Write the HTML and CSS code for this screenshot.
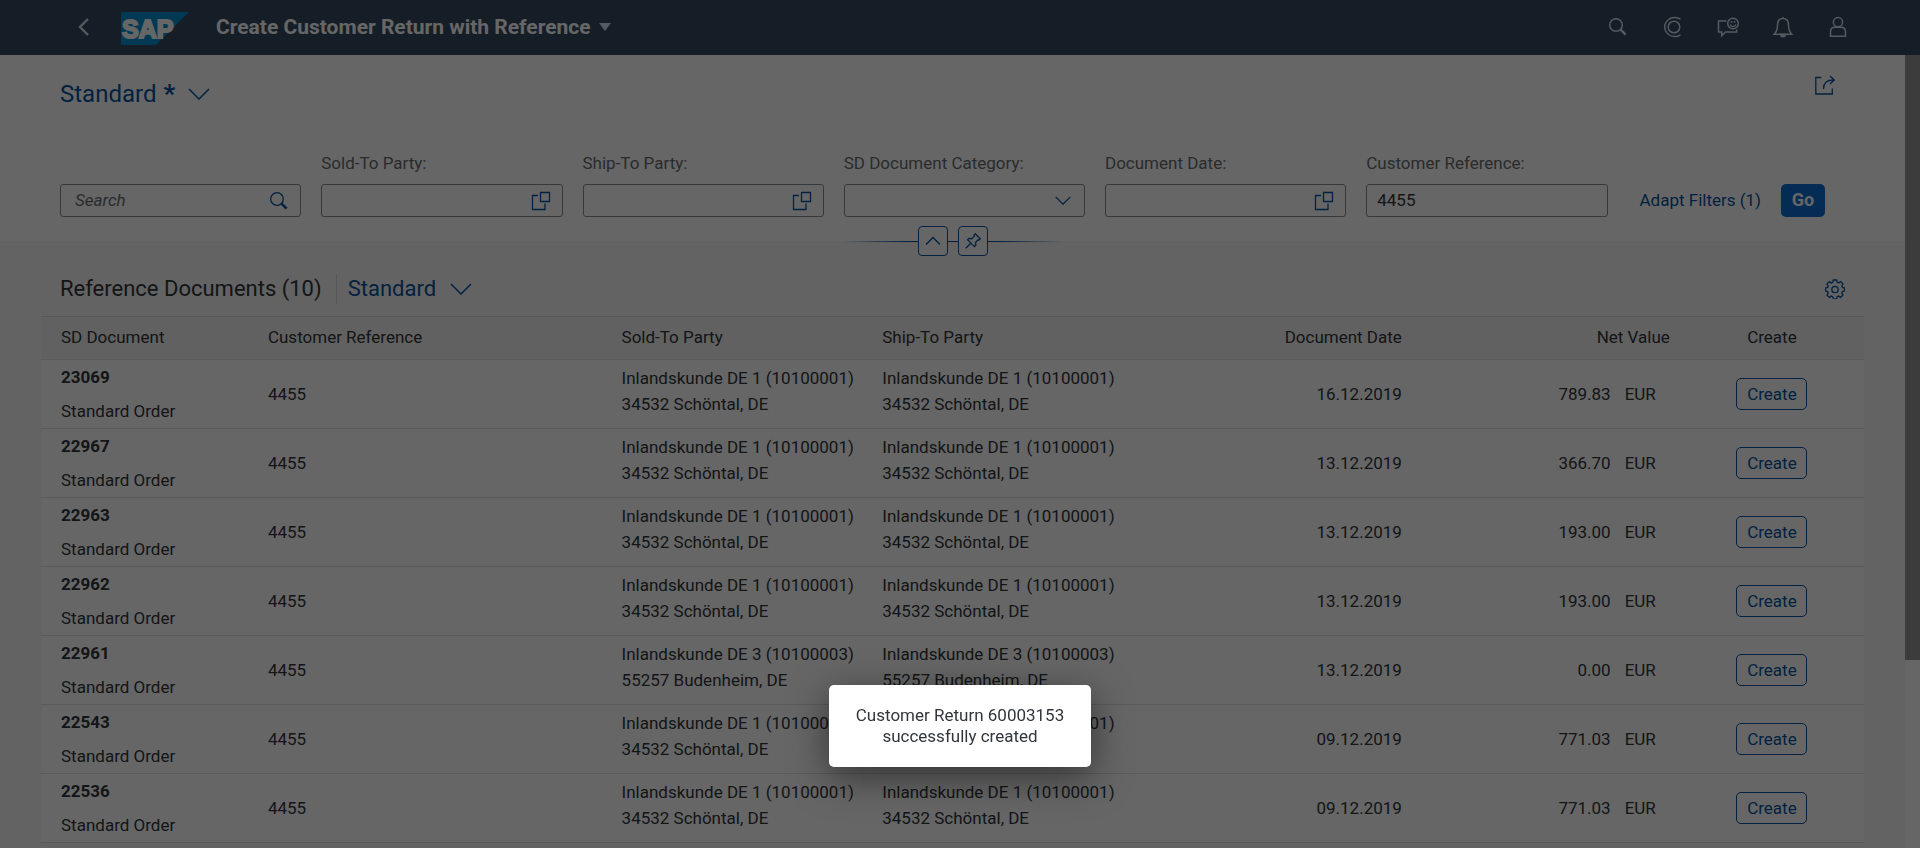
FILE: index.html
```
<!DOCTYPE html>
<html lang="en">
<head>
<meta charset="utf-8">
<title>Create Customer Return with Reference</title>
<link rel="stylesheet" href="styles.css">
</head>
<body>
<svg class="sprite" aria-hidden="true">
  <symbol id="i-search" viewBox="0 0 20 20"><circle cx="8" cy="8" r="6.3"/><path d="M12.6 12.6l5 5" stroke-width="2.6"/></symbol>
  <symbol id="i-help" viewBox="0 0 20 20"><path d="M7 4.500H1.500v14h12.500v-6"/><path d="M9.500 1.500h9v9h-9z"/></symbol>
  <symbol id="i-down" viewBox="0 0 22 12"><path d="M1 1l10 10L21 1"/></symbol>
  <symbol id="i-share" viewBox="0 0 20 20"><path d="M6.500 2.500H.8v16.500h16.500v-5.500"/><path d="M8.500 14c0-6 3-9 10-9M15 1l4.200 4-4.200 4"/></symbol>
  <symbol id="i-gear" viewBox="0 0 20 20"><path d="M8.300 1h3.400l.5 2.300 1.500.6 2-1.300 2.300 2.400-1.200 2 .6 1.500 2.200.5v3l-2.200.5-.6 1.500 1.200 2-2.300 2.400-2-1.300-1.500.6-.5 2.300H8.300l-.5-2.300-1.500-.6-2 1.300L2 16l1.200-2-.6-1.500L.5 12V9l2.100-.5L3.200 7 2 5l2.300-2.400 2 1.300 1.500-.6z"/><circle cx="10" cy="10.500" r="3.200"/></symbol>
</svg>

<header class="shell">
  <button class="shell-btn back" aria-label="Back"><svg viewBox="0 0 11 18"><path d="M10 1L2 9l8 8"/></svg></button>
  <a class="logo" href="#" aria-label="SAP"><svg viewBox="0 0 68 33"><path class="logo-bg" d="M0 0h68L35 33H0z"/><text class="logo-text" x="1" y="26">SAP</text></svg></a>
  <button class="title">Create Customer Return with Reference<span class="caret"></span></button>
  <nav class="shell-tools" aria-label="Shell">
    <button class="shell-btn" aria-label="Search"><svg viewBox="0 0 20 20"><use href="#i-search"/></svg></button>
    <button class="shell-btn" aria-label="CoPilot"><svg viewBox="0 0 20 20"><path d="M17.500 2.200C14 -.3 9 -.1 5.500 2.500 .500 6.500 .500 13.500 5.500 17.500c3.500 2.600 8.500 2.800 12 .3"/><circle cx="11" cy="10" r="5.800"/></svg></button>
    <button class="shell-btn" aria-label="Feedback"><svg viewBox="0 0 20 20"><path d="M8.500 4H.500v11h3.200v3.800l3.800-3.800h11.200v-2.500"/><circle cx="15" cy="6.500" r="5.300"/><path d="M12 7.500c1.200 2.600 4.800 2.600 6 0M13.500 4v1.700M16.500 4v1.700"/></svg></button>
    <button class="shell-btn" aria-label="Notifications"><svg viewBox="0 0 20 20"><path d="M10 1.500c-4 0-5.500 3-5.500 6.500 0 4-1 7-3.300 9.200h17.600C16.500 15 15.500 12 15.500 8c0-3.500-1.500-6.500-5.500-6.500zM10 0v1.500"/><path class="solid" d="M7.500 17.500h5c-.5 3-4.500 3-5 0z"/></svg></button>
    <button class="shell-btn" aria-label="User"><svg viewBox="0 0 20 20"><circle cx="10" cy="5.200" r="4.600"/><path d="M2.500 19.300v-4.500c0-3 2-4.600 4.500-4.600h6c2.500 0 4.500 1.600 4.500 4.600v4.500z"/></svg></button>
  </nav>
</header>

<main class="page">
  <section class="filters">
    <div class="variant-row">
      <button class="variant variant-lg">Standard <b>*</b><svg class="chev"><use href="#i-down"/></svg></button>
      <button class="icon-btn share" aria-label="Share"><svg><use href="#i-share"/></svg></button>
    </div>
    <form class="filter-bar">
      <div class="field"><div class="control"><input type="search" placeholder="Search" aria-label="Search" class="search"><svg><use href="#i-search"/></svg></div></div>
      <div class="field"><label for="sold">Sold-To Party:</label><div class="control"><input id="sold" type="text"><svg><use href="#i-help"/></svg></div></div>
      <div class="field"><label for="ship">Ship-To Party:</label><div class="control"><input id="ship" type="text"><svg><use href="#i-help"/></svg></div></div>
      <div class="field"><label for="cat">SD Document Category:</label><div class="control"><select id="cat"><option></option></select><svg class="small-chev"><use href="#i-down"/></svg></div></div>
      <div class="field"><label for="date">Document Date:</label><div class="control"><input id="date" type="text"><svg><use href="#i-help"/></svg></div></div>
      <div class="field"><label for="ref">Customer Reference:</label><div class="control"><input id="ref" type="text" value="4455"></div></div>
      <div class="actions"><button type="button" class="adapt">Adapt Filters (1)</button><button type="button" class="go">Go</button></div>
    </form>
    <div class="divider">
      <button aria-label="Collapse header"><svg viewBox="0 0 16 16"><path d="M1 11.500l7-7 7 7"/></svg></button>
      <button aria-label="Pin header"><svg viewBox="0 0 16 16"><path d="M10.200.8l5 5-1.200 1.300-.9-.3-2.600 2.700.3 2.700-1.400 1.400-6.800-6.800L4 5.400l2.700.3 2.700-2.600-.4-1z"/><path d="M5.500 10.500L.8 15.200"/></svg></button>
    </div>
  </section>

  <section class="documents">
    <div class="toolbar">
      <h2>Reference Documents (10)</h2>
      <button class="variant">Standard<svg class="chev"><use href="#i-down"/></svg></button>
      <button class="icon-btn gear" aria-label="Settings"><svg><use href="#i-gear"/></svg></button>
    </div>
    <table>
      <colgroup><col class="c-doc"><col class="c-ref"><col class="c-party"><col class="c-party"><col class="c-date"><col class="c-net"><col class="c-create"></colgroup>
      <thead><tr><th>SD Document</th><th>Customer Reference</th><th>Sold-To Party</th><th>Ship-To Party</th><th class="end">Document Date</th><th class="end">Net Value</th><th class="mid">Create</th></tr></thead>
      <tbody>
        <tr><td><b>23069</b><span class="kind">Standard Order</span></td><td>4455</td><td class="party">Inlandskunde DE 1 (10100001)<br>34532 Schöntal, DE</td><td class="party">Inlandskunde DE 1 (10100001)<br>34532 Schöntal, DE</td><td class="end">16.12.2019</td><td class="end">789.83<span class="cur">EUR</span></td><td class="mid"><button class="create">Create</button></td></tr>
        <tr><td><b>22967</b><span class="kind">Standard Order</span></td><td>4455</td><td class="party">Inlandskunde DE 1 (10100001)<br>34532 Schöntal, DE</td><td class="party">Inlandskunde DE 1 (10100001)<br>34532 Schöntal, DE</td><td class="end">13.12.2019</td><td class="end">366.70<span class="cur">EUR</span></td><td class="mid"><button class="create">Create</button></td></tr>
        <tr><td><b>22963</b><span class="kind">Standard Order</span></td><td>4455</td><td class="party">Inlandskunde DE 1 (10100001)<br>34532 Schöntal, DE</td><td class="party">Inlandskunde DE 1 (10100001)<br>34532 Schöntal, DE</td><td class="end">13.12.2019</td><td class="end">193.00<span class="cur">EUR</span></td><td class="mid"><button class="create">Create</button></td></tr>
        <tr><td><b>22962</b><span class="kind">Standard Order</span></td><td>4455</td><td class="party">Inlandskunde DE 1 (10100001)<br>34532 Schöntal, DE</td><td class="party">Inlandskunde DE 1 (10100001)<br>34532 Schöntal, DE</td><td class="end">13.12.2019</td><td class="end">193.00<span class="cur">EUR</span></td><td class="mid"><button class="create">Create</button></td></tr>
        <tr><td><b>22961</b><span class="kind">Standard Order</span></td><td>4455</td><td class="party">Inlandskunde DE 3 (10100003)<br>55257 Budenheim, DE</td><td class="party">Inlandskunde DE 3 (10100003)<br>55257 Budenheim, DE</td><td class="end">13.12.2019</td><td class="end">0.00<span class="cur">EUR</span></td><td class="mid"><button class="create">Create</button></td></tr>
        <tr><td><b>22543</b><span class="kind">Standard Order</span></td><td>4455</td><td class="party">Inlandskunde DE 1 (10100001)<br>34532 Schöntal, DE</td><td class="party">Inlandskunde DE 1 (10100001)<br>34532 Schöntal, DE</td><td class="end">09.12.2019</td><td class="end">771.03<span class="cur">EUR</span></td><td class="mid"><button class="create">Create</button></td></tr>
        <tr><td><b>22536</b><span class="kind">Standard Order</span></td><td>4455</td><td class="party">Inlandskunde DE 1 (10100001)<br>34532 Schöntal, DE</td><td class="party">Inlandskunde DE 1 (10100001)<br>34532 Schöntal, DE</td><td class="end">09.12.2019</td><td class="end">771.03<span class="cur">EUR</span></td><td class="mid"><button class="create">Create</button></td></tr>
      </tbody>
    </table>
  </section>
  <div class="scrollbar"><div class="thumb"></div></div>
</main>

<div class="backdrop"></div>
<div class="toast" role="status">Customer Return 60003153 successfully created</div>
</body>
</html>
```
FILE: styles.css
```
* { box-sizing: border-box; }
body {
  margin: 0;
  height: 100vh;
  overflow: hidden;
  display: flex;
  flex-direction: column;
  background: #f7f7f7;
  color: #32363a;
  font: 17px/26px Roboto, "Liberation Sans", sans-serif;
}
button, input, select { font: inherit; color: inherit; }
button { padding: 0; border: 0; background: none; white-space: nowrap; }
svg { fill: none; stroke: currentColor; stroke-width: 1.3; display: block; }
.sprite { position: absolute; width: 0; height: 0; }

/* Shell header */
.shell {
  flex: none;
  height: 55px;
  padding: 0 72px 2px 78px;
  display: flex;
  align-items: center;
  background: #354a5f;
  color: #d1e0ee;
}
.shell-btn { color: #d1e0ee; }
.back svg { width: 11px; height: 18px; stroke-width: 2.4; }
.logo { margin: 4px 27px 0 32px; }
.logo svg { width: 68px; height: 33px; stroke: none; }
.logo-bg { fill: #008fd3; }
.logo-text { fill: #fff; stroke: #fff; stroke-width: 2; font: bold 25px "Liberation Sans", sans-serif; }
.title { color: #fff; font-size: 21px; font-weight: 700; display: flex; align-items: center; gap: 8px; }
.caret { border: 6px solid transparent; border-top: 8px solid #d1e0ee; border-bottom: 0; }
.shell-tools { margin-left: auto; display: flex; gap: 35px; }
.shell-tools svg { width: 20px; height: 20px; stroke-width: 1.5; overflow: visible; }
.solid { fill: currentColor; }

/* Page and scrollbar */
.page {
  flex: 1;
  min-height: 0;
  display: grid;
  grid-template: auto 1fr / 1fr 15px;
}
.scrollbar { grid-area: 1 / 2 / 3 / 3; background: #fff; }
.thumb { height: 76.3%; background: #969696; }

/* Filter bar */
.filters { background: #fff; padding: 20px 80px 0 60px; box-shadow: 0 1px 0 #f0f0f0; }
.variant-row { display: flex; justify-content: space-between; align-items: flex-start; height: 75px; }
.variant { color: #0854a0; font-size: 22px; display: flex; align-items: center; gap: 14px; }
.variant-lg { font-size: 24px; height: 38px; gap: 7px; }
.variant-lg b { font-size: 26px; }
.variant-lg .chev { margin-left: 6px; }
.chev { width: 22px; height: 12px; stroke-width: 1.5; }
.icon-btn { color: #0854a0; }
.icon-btn svg { width: 20px; height: 20px; }
.share { margin-right: -10px; }
.filter-bar { display: flex; gap: 20px; align-items: flex-end; }
.field { flex: 1; min-width: 0; }
.field label { display: block; color: #6a6d70; margin-bottom: 8px; }
.control { display: grid; align-items: center; }
.control > * { grid-area: 1 / 1; }
.control input, .control select {
  width: 100%;
  height: 33px;
  padding: 0 10px 2px;
  border: 1px solid #89919a;
  border-radius: 3px;
  background: #fff;
  appearance: none;
  outline: 0;
}
.control .search { padding-left: 14px; }
.search::placeholder { color: #6a6d70; font-style: italic; opacity: 1; }
.control svg { justify-self: end; margin-right: 12px; width: 20px; height: 20px; color: #0854a0; pointer-events: none; }
.control .small-chev { width: 16px; height: 9px; margin-right: 14px; stroke-width: 1.8; }
.actions { display: flex; gap: 20px; padding-left: 12px; }
.adapt { color: #0854a0; padding-bottom: 2px; }
.go { width: 44px; height: 33px; padding-bottom: 2px; border-radius: 5px; background: #0a6ed1; color: #fff; font-size: 18px; font-weight: 700; }
.divider { position: relative; margin: 9px -20px -14px 0; display: flex; justify-content: center; gap: 10px; }
.divider::before {
  content: "";
  position: absolute;
  inset: 15px 0 auto;
  margin: 0 auto;
  width: 226px;
  height: 1px;
  background: linear-gradient(to right, transparent, #0854a0 30%, #0854a0 70%, transparent);
}
.divider button { position: relative; width: 30px; height: 30px; border: 1px solid #0854a0; border-radius: 4px; background: #fff; color: #0854a0; display: grid; place-items: center; }
.divider svg { width: 16px; height: 16px; }

/* Documents table */
.documents { padding: 24px 41px 0; min-height: 0; overflow: hidden; }
.toolbar { display: flex; align-items: center; height: 50px; padding: 0 19px 5px; }
h2 { margin: 0 14px 0 0; font-size: 22px; font-weight: 400; line-height: 30px; }
.toolbar .variant { border-left: 1px solid #d9d9d9; padding-left: 11px; height: 30px; }
.gear { margin-left: auto; }
table { width: 100%; table-layout: fixed; border-collapse: collapse; background: #fff; }
.c-doc { width: 11.9%; }
.c-ref { width: 19.4%; }
.c-party { width: 14.3%; }
.c-date { width: 15.3%; }
.c-net { width: 14.7%; }
th, td { padding: 0 10px; text-align: left; font-weight: 400; white-space: nowrap; }
th { padding-bottom: 2px; }
th:first-child, td:first-child { padding-left: 20px; }
tr { height: 69px; border-bottom: 1px solid #e0e0e0; }
thead tr { height: 43px; background: #f2f2f2; border-top: 1px solid #d9d9d9; }
.party { padding-bottom: 6px; }
.kind { display: block; margin-top: 8px; }
.end { text-align: right; }
.cur { margin: 0 14px; }
.mid { text-align: center; }
.create { width: 71px; height: 32px; border: 1px solid #0854a0; border-radius: 5px; color: #0854a0; display: inline-block; vertical-align: middle; }

/* Busy overlay and toast */
.backdrop { position: fixed; inset: 0; background: rgba(0, 0, 0, .6); }
.toast {
  position: fixed;
  bottom: 81px;
  left: 50%;
  transform: translateX(-50%);
  width: 262px;
  padding: 20px;
  border-radius: 5px;
  background: #fff;
  text-align: center;
  line-height: 21px;
  box-shadow: 0 10px 38px rgba(0, 0, 0, .5);
}
```
